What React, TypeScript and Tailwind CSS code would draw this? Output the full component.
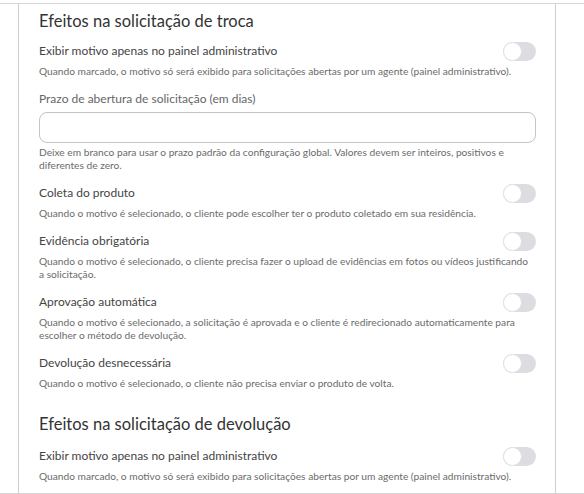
import React from 'react';

function Toggle() {
  return (
    <div className="relative h-[19px] w-[33px] shrink-0 rounded-full bg-[#dcdde1]">
      <div className="absolute left-0 top-0 h-[19px] w-[19px] rounded-full border border-[#e2e2e6] bg-white" />
    </div>
  );
}

interface OptionProps {
  label: string;
  help: string;
}

function Option({ label, help }: OptionProps) {
  return (
    <div className="mt-[11px] first:mt-0">
      <div className="flex h-5 items-center justify-between">
        <span className="text-[12px] text-[#444]">{label}</span>
        <Toggle />
      </div>
      <p className="mt-1 pr-1 text-[10.2px] leading-[13px] text-[#6b6b6b]">{help}</p>
    </div>
  );
}

export default function App() {
  return (
    <div
      className="h-[494px] w-[584px] overflow-hidden bg-white pt-[3px]"
      style={{ fontFamily: 'Lato, "Noto Sans", sans-serif' }}
    >
      <div className="border-y border-[#d6d6d6]">
        <div className="ml-[18px] w-[538px] border-x border-[#cfcfcf] pl-5 pr-[19px] pb-[10px]">
          {/* Troca */}
          <h2 className="pt-[5px] text-[16.5px] leading-6 text-[#333]">Efeitos na solicitação de troca</h2>
          <div className="mt-2">
            <Option
              label="Exibir motivo apenas no painel administrativo"
              help="Quando marcado, o motivo só será exibido para solicitações abertas por um agente (painel administrativo)."
            />
            <div className="mt-[11px]">
              <div className="flex h-5 items-center text-[12px] text-[#666]">
                Prazo de abertura de solicitação (em dias)
              </div>
              <input
                type="text"
                className="mt-[3px] block h-[31px] w-full rounded-lg border border-[#c4c4c4] bg-white px-3 outline-none"
              />
              <p className="mt-[3px] pr-1 text-[10.2px] leading-[13px] text-[#6b6b6b]">
                Deixe em branco para usar o prazo padrão da configuração global. Valores devem ser inteiros, positivos e diferentes de zero.
              </p>
            </div>
            <Option
              label="Coleta do produto"
              help="Quando o motivo é selecionado, o cliente pode escolher ter o produto coletado em sua residência."
            />
            <Option
              label="Evidência obrigatória"
              help="Quando o motivo é selecionado, o cliente precisa fazer o upload de evidências em fotos ou vídeos justificando a solicitação."
            />
            <Option
              label="Aprovação automática"
              help="Quando o motivo é selecionado, a solicitação é aprovada e o cliente é redirecionado automaticamente para escolher o método de devolução."
            />
            <Option
              label="Devolução desnecessária"
              help="Quando o motivo é selecionado, o cliente não precisa enviar o produto de volta."
            />
          </div>

          {/* Devolução */}
          <h2 className="mt-[22px] text-[16.5px] leading-6 text-[#333]">Efeitos na solicitação de devolução</h2>
          <div className="mt-[10px]">
            <Option
              label="Exibir motivo apenas no painel administrativo"
              help="Quando marcado, o motivo só será exibido para solicitações abertas por um agente (painel administrativo)."
            />
          </div>
        </div>
      </div>
    </div>
  );
}
